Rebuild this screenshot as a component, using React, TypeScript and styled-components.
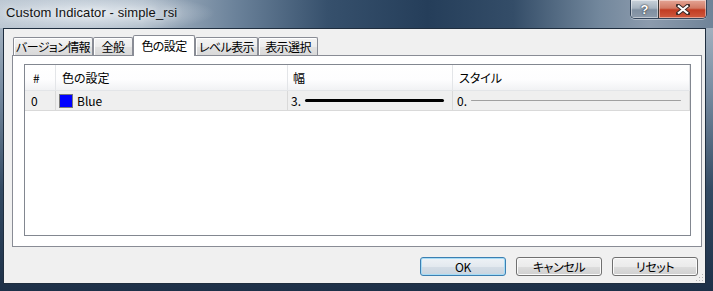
import React from "react";
import styled, { createGlobalStyle } from "styled-components";

const GlobalStyle = createGlobalStyle`
  html, body { margin: 0; padding: 0; background: #1c2f45; }
  body { font-family: "Noto Sans CJK JP", "Liberation Sans", sans-serif; }
`;

const Window = styled.div`
  position: relative;
  width: 713px;
  height: 291px;
  display: flex;
  flex-direction: column;
  overflow: hidden;
  background: linear-gradient(180deg, #b4c0cc 0%, #7a8ea3 30%, #334a63 65%, #1d3048 100%);
`;

const TitleBar = styled.div`
  height: 28px;
  flex: none;
  display: flex;
  align-items: flex-start;
  background:
    radial-gradient(ellipse 120px 20px at 95px 13px, rgba(236, 241, 246, 0.85), rgba(236, 241, 246, 0) 100%),
    linear-gradient(90deg, #bdc8d3 0%, #aab8c6 20%, #6b829a 33%, #36506c 46%, #253e5a 60%, #344d68 72%, #72879c 84%, #8c9bad 91%, #6f8398 100%);
`;

const TitleText = styled.span`
  flex: 1;
  margin: 5px 0 0 6px;
  font: 13px/15px "Liberation Sans", sans-serif;
  letter-spacing: 0.1px;
  color: #111;
  text-shadow: 0 0 6px rgba(255, 255, 255, 0.9);
`;

const CaptionButtons = styled.div`
  display: flex;
  margin-right: 6px;
  height: 18px;
  border: 1px solid #33445a;
  border-top: none;
  border-radius: 0 0 5px 5px;
  overflow: hidden;
  box-shadow: 0 1px 0 rgba(255, 255, 255, 0.35);
`;

const CaptionButton = styled.div<{ $close?: boolean }>`
  width: ${(p) => (p.$close ? 47 : 27)}px;
  display: flex;
  align-items: center;
  justify-content: center;
  box-shadow: inset 0 0 0 1px rgba(255, 255, 255, 0.45);
  border-left: ${(p) => (p.$close ? "1px solid #3b3535" : "none")};
  background: ${(p) =>
    p.$close
      ? "linear-gradient(180deg, #e4a595 0%, #d27a64 45%, #c13c22 55%, #cf5a3f 100%)"
      : "linear-gradient(180deg, #c9d2db 0%, #a6b3c0 45%, #7f8fa1 55%, #8d9bab 100%)"};
`;

const HelpGlyph = styled.span`
  font: bold 13px/1 "Liberation Sans", sans-serif;
  color: #fff;
  text-shadow: 0 0 1px #333, 0 0 2px #333;
`;

const Client = styled.div`
  position: relative;
  flex: 1;
  margin: 0 7px 7px 3px;
  border: 1px solid #1f2e3f;
  background: #f0f0f0;
  padding: 6px 3px 0 8px;
  display: flex;
  flex-direction: column;
  font-size: 12px;
  font-feature-settings: "palt";
  color: #000;
`;

const TabStrip = styled.div`
  height: 20px;
  display: flex;
  align-items: flex-end;
  padding-left: 1px;
`;

const Tab = styled.div<{ $active?: boolean; $w: number }>`
  position: relative;
  z-index: ${(p) => (p.$active ? 1 : 0)};
  box-sizing: border-box;
  width: ${(p) => p.$w}px;
  height: ${(p) => (p.$active ? 21 : 18)}px;
  margin-bottom: ${(p) => (p.$active ? -1 : 0)}px;
  border: 1px solid #898c95;
  border-bottom: none;
  border-radius: 2px 2px 0 0;
  background: ${(p) =>
    p.$active ? "#fff" : "linear-gradient(180deg, #f4f4f4 0%, #ececec 50%, #e2e2e2 51%, #d9d9d9 100%)"};
  box-shadow: inset 1px 1px 0 #fff;
  display: flex;
  justify-content: center;
  align-items: ${(p) => (p.$active ? "flex-start" : "center")};
  padding-top: ${(p) => (p.$active ? 2 : 0)}px;
  line-height: 15px;
  letter-spacing: -0.6px;
  white-space: nowrap;
`;

const Panel = styled.div`
  box-sizing: border-box;
  height: 192px;
  border: 1px solid #898c95;
  background: #fff;
  padding: 8px 10px 10px 11px;
  display: flex;
  flex-direction: column;
`;

const ListView = styled.div`
  flex: 1;
  border: 1px solid #828790;
  background: #fff;
`;

const Columns = styled.div<{ $h: number }>`
  display: grid;
  grid-template-columns: 31px 232px 165px 1fr;
  height: ${(p) => p.$h}px;
`;

const HeaderCell = styled.div<{ $pad: number }>`
  display: flex;
  align-items: center;
  padding-left: ${(p) => p.$pad}px;
  border-right: 1px solid #e3e5e8;
  background: linear-gradient(180deg, #ffffff 0%, #fdfdfe 60%, #f1f2f4 100%);
  border-bottom: 1px solid #e3e5e8;
`;

const RowCell = styled.div<{ $pad: number }>`
  display: flex;
  align-items: center;
  padding-left: ${(p) => p.$pad}px;
  background: #efefef;
  border-right: 1px solid #d9d9d9;
  border-bottom: 1px solid #d9d9d9;
`;

const Swatch = styled.span<{ $color: string }>`
  box-sizing: border-box;
  width: 14px;
  height: 14px;
  margin-right: 4px;
  border: 1px solid #7a7a7a;
  background: ${(p) => p.$color};
`;

const LineSample = styled.span<{ $w: number; $thick: number; $color: string }>`
  display: block;
  margin-left: 4px;
  width: ${(p) => (p.$w ? `${p.$w}px` : "auto")};
  flex: ${(p) => (p.$w ? "none" : "1")};
  margin-right: ${(p) => (p.$w ? 0 : 8)}px;
  height: ${(p) => p.$thick}px;
  border-radius: ${(p) => p.$thick / 2}px;
  background: ${(p) => p.$color};
`;

const ButtonRow = styled.div`
  display: flex;
  justify-content: flex-end;
  gap: 10px;
  margin: 10px 4px 0 0;
`;

const Button = styled.button<{ $default?: boolean }>`
  box-sizing: border-box;
  width: 86px;
  height: 19px;
  padding: 0;
  border: 1px solid ${(p) => (p.$default ? "#3c7fb1" : "#707070")};
  border-radius: 3px;
  background: ${(p) =>
    p.$default
      ? "linear-gradient(180deg, #eef2f6 0%, #e3e9ef 50%, #d4dde6 51%, #c9d4df 100%)"
      : "linear-gradient(180deg, #f2f2f2 0%, #ebebeb 50%, #dddddd 51%, #cfcfcf 100%)"};
  box-shadow: inset 0 0 0 1px ${(p) => (p.$default ? "#a6dcf6" : "#fbfbfb")};
  font: 12px/15px "Noto Sans CJK JP", sans-serif;
  font-feature-settings: "palt";
  letter-spacing: -0.4px;
  color: #000;
`;

const Grip = styled.svg`
  position: absolute;
  right: 1px;
  bottom: 1px;
`;

const tabs = [
  { label: "バージョン情報", w: 80 },
  { label: "全般", w: 40 },
  { label: "色の設定", w: 62, active: true },
  { label: "レベル表示", w: 63 },
  { label: "表示選択", w: 60 },
];

export default function App() {
  return (
    <>
      <GlobalStyle />
      <Window>
        <TitleBar>
          <TitleText>Custom Indicator - simple_rsi</TitleText>
          <CaptionButtons>
            <CaptionButton>
              <HelpGlyph>?</HelpGlyph>
            </CaptionButton>
            <CaptionButton $close>
              <svg width="14" height="11" viewBox="0 0 14 11">
                <path d="M2 1.5 L12 9.5 M12 1.5 L2 9.5" stroke="#3a2a28" strokeWidth="4" strokeLinecap="square" />
                <path d="M2 1.5 L12 9.5 M12 1.5 L2 9.5" stroke="#fff" strokeWidth="2.2" />
              </svg>
            </CaptionButton>
          </CaptionButtons>
        </TitleBar>

        <Client>
          <TabStrip>
            {tabs.map((t) => (
              <Tab key={t.label} $w={t.w} $active={t.active}>
                {t.label}
              </Tab>
            ))}
          </TabStrip>
          <Panel>
            <ListView>
              <Columns $h={26}>
                <HeaderCell $pad={8}>#</HeaderCell>
                <HeaderCell $pad={6}>色の設定</HeaderCell>
                <HeaderCell $pad={5}>幅</HeaderCell>
                <HeaderCell $pad={6}>スタイル</HeaderCell>
              </Columns>
              <Columns $h={20}>
                <RowCell $pad={6}>0</RowCell>
                <RowCell $pad={3}>
                  <Swatch $color="#0000ff" />
                  Blue
                </RowCell>
                <RowCell $pad={3}>
                  3.
                  <LineSample $w={139} $thick={3} $color="#000" />
                </RowCell>
                <RowCell $pad={4}>
                  0.
                  <LineSample $w={0} $thick={1} $color="#a0a0a0" />
                </RowCell>
              </Columns>
            </ListView>
          </Panel>
          <ButtonRow>
            <Button $default>OK</Button>
            <Button>キャンセル</Button>
            <Button>リセット</Button>
          </ButtonRow>
          <Grip width="10" height="10" viewBox="0 0 10 10">
            {[
              [8, 2],
              [8, 5],
              [5, 5],
              [8, 8],
              [5, 8],
              [2, 8],
            ].map(([x, y]) => (
              <rect key={`${x}-${y}`} x={x} y={y} width="1" height="1" fill="#b5b5b5" />
            ))}
          </Grip>
        </Client>
      </Window>
    </>
  );
}
